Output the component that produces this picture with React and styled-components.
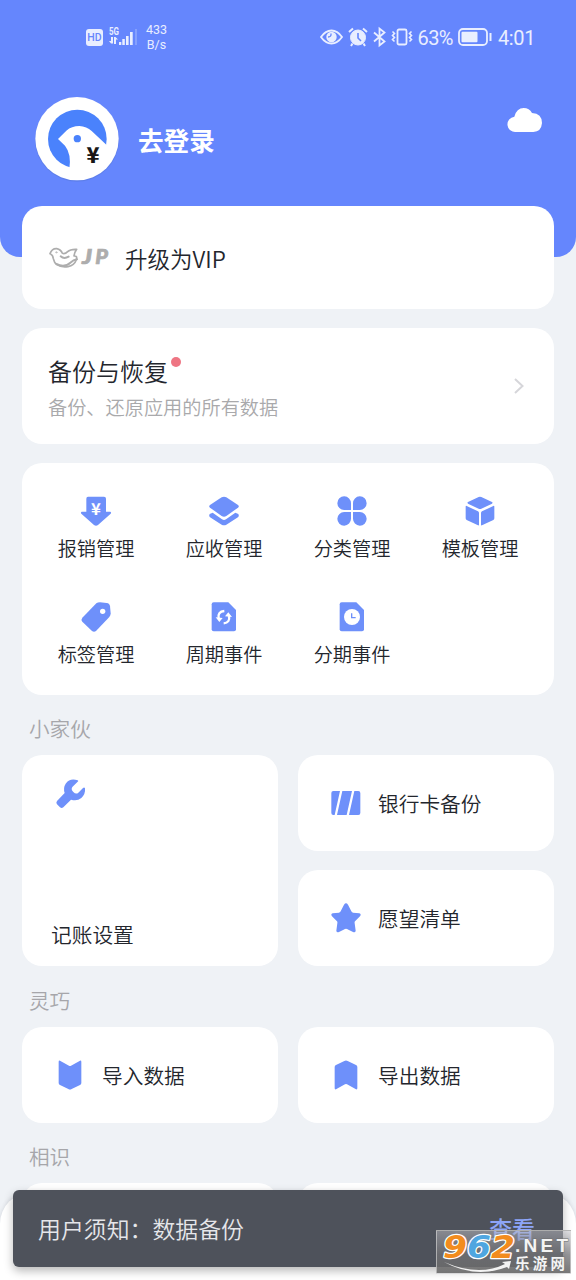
import React from "react";
import styled, { createGlobalStyle } from "styled-components";

const GlobalStyle = createGlobalStyle`
  * {
    box-sizing: border-box;
  }

  body {
    margin: 0;
    background: #eff2f6;
    font-family: "Noto Sans CJK SC", sans-serif;
    font-weight: 350;
    color: #23262d;
  }

  svg {
    display: block;
    flex-shrink: 0;
    overflow: visible;
  }
`;

const Screen = styled.div`
  position: relative;
  width: 576px;
  height: 1280px;
  overflow: hidden;
  background: #eff2f6;
`;

// Header
const Header = styled.header`
  height: 257px;
  background: #6586fd;
  border-radius: 0 0 20px 20px;
`;

const StatusBar = styled.div`
  display: flex;
  align-items: center;
  justify-content: space-between;
  height: 74px;
  padding: 0 41px 0 86px;
  color: #e9eeff;
  font-family: Roboto, sans-serif;
  font-weight: 400;
`;

const StatusGroup = styled.div`
  display: flex;
  align-items: center;
  gap: ${(props) => props.$gap}px;
`;

const HdBadge = styled.span`
  width: 17px;
  height: 17px;
  border-radius: 3px;
  background: #e9eeff;
  color: #6586fd;
  font-size: 10.5px;
  font-weight: 500;
  line-height: 18px;
  text-align: center;
`;

const Speed = styled.span`
  margin-left: 2px;
  font-size: 12.5px;
  line-height: 15px;
  text-align: center;
`;

const StatusText = styled.span`
  font-size: 20px;
  line-height: 24px;
  letter-spacing: ${(props) => props.$spacing || 0}px;
  margin-left: ${(props) => props.$left || 0}px;
  padding-top: 1px;
`;

const Profile = styled.div`
  display: flex;
  align-items: center;
  height: 130px;
  padding: 0 34px;
`;

const LoginText = styled.span`
  flex: 1;
  margin-left: 18px;
  padding-top: 1px;
  color: #fff;
  font-size: 25.6px;
  font-weight: 700;
  line-height: 36px;
`;

const CloudButton = styled.div`
  margin-top: -39px;
`;

// Content
const Content = styled.main`
  display: flex;
  flex-direction: column;
  margin-top: -51px;
  padding: 0 22px;
`;

const Card = styled.section`
  background: #fff;
  border-radius: 20px;
`;

const VipCard = styled(Card)`
  display: flex;
  align-items: center;
  gap: 15px;
  height: 103px;
  padding-left: 27px;
  font-size: 22.5px;
`;

const BackupCard = styled(Card)`
  display: flex;
  align-items: center;
  justify-content: space-between;
  height: 116px;
  margin-top: 19px;
  padding: 0 29px 0 26px;
`;

const BackupInfo = styled.div`
  padding-top: 5px;
`;

const BackupTitle = styled.div`
  display: flex;
  gap: 3px;
  font-size: 24px;
  line-height: 36px;
`;

const RedDot = styled.i`
  width: 10px;
  height: 10px;
  margin-top: 4px;
  border-radius: 50%;
  background: #ee7583;
`;

const BackupText = styled.div`
  color: #a9a9ab;
  font-size: 19.2px;
  line-height: 36px;
`;

const MenuCard = styled(Card)`
  display: grid;
  grid-template-columns: repeat(4, 128px);
  grid-auto-rows: 106px;
  height: 232px;
  margin-top: 19px;
  padding: 33px 10px 0;
`;

const MenuItem = styled.div`
  display: flex;
  flex-direction: column;
  align-items: center;
  gap: 7px;
  font-size: 19.2px;
  line-height: 30px;
`;

const SectionTitle = styled.h2`
  margin: ${(props) => props.$top || 17}px 0 10px;
  padding-left: 7px;
  color: #a6a6aa;
  font-size: 20.6px;
  font-weight: 350;
  line-height: 33px;
`;

const Columns = styled.div`
  display: grid;
  grid-template-columns: 1fr 1fr;
  gap: 19px 20px;
`;

const Tile = styled(Card)`
  display: flex;
  align-items: center;
  gap: 17px;
  height: 96px;
  padding: 0 0 1px 33px;
  font-size: 20.7px;
  line-height: 30px;
`;

const TallTile = styled(Card)`
  display: flex;
  flex-direction: column;
  justify-content: space-between;
  grid-row: span 2;
  padding: 24px 29px 17px;
  font-size: 20.7px;
  line-height: 30px;

  svg {
    margin-left: 5px;
  }
`;

// Bottom
const BottomSheet = styled.div`
  position: absolute;
  left: 0;
  right: 0;
  bottom: 0;
  height: 88px;
  border-radius: 32px 32px 0 0;
  background: #fff;
  box-shadow: 0 0 4px rgba(60, 70, 90, 0.16);
`;

const Snackbar = styled.div`
  position: absolute;
  left: 13px;
  right: 13px;
  bottom: 13px;
  display: flex;
  align-items: center;
  justify-content: space-between;
  height: 77px;
  padding: 0 28px 0 25px;
  border-radius: 6px;
  background: #4e525b;
  box-shadow: 0 4px 10px rgba(0, 0, 0, 0.28);
  color: #e5e6ea;
  font-size: 22.9px;
  line-height: 33px;
`;

const SnackAction = styled.span`
  color: #8da5f8;
  font-weight: 500;
`;

const Watermark = styled.div`
  position: absolute;
  right: 5px;
  bottom: 6px;
  width: 135px;
  height: 44px;
  border: 1px solid rgba(220, 220, 220, 0.6);
  background: linear-gradient(
    rgba(190, 190, 196, 0.5),
    rgba(115, 115, 118, 0.75) 55%,
    rgba(105, 105, 105, 0.9)
  );
`;

const blue = "#6e90fa";

const menuPaths = {
  expense: (
    <>
      <path d="M21 2h48q6 0 6 6v39h13q4 2 1 6L51 87q-6 4-12 0L1 53q-3-4 1-6h14V8q0-6 5-6Z" />
      <text x="45" y="58" fontSize="50" fontWeight="700" fill="#fff" textAnchor="middle" fontFamily="Noto Sans CJK SC, sans-serif">
        ¥
      </text>
    </>
  ),
  receivable: (
    <>
      <path d="M38 4q7-4 14 0l35 23q5 4 0 8L52 60q-7 4-14 0L3 35q-5-4 0-8Z" />
      <path d="m2 54 9-4 28 20q6 4 12 0l28-20 9 4q3 4 0 9L52 86q-7 4-14 0L2 63q-3-5 0-9Z" />
    </>
  ),
  category: (
    <path d="M42 42H22A20.500 20.500 0 1 1 42 22ZM48 42V22A20.500 20.500 0 1 1 68 42ZM42 48V68A20.500 20.500 0 1 1 22 48ZM48 48H68A20.500 20.500 0 1 1 48 68Z" />
  ),
  template: (
    <>
      <path d="M41 3q4-2 8 0l32 15q4 2 0 5L49 38q-4 2-8 0L9 23q-4-3 0-5Z" />
      <path d="m5 30 34 16q3 2 3 5v35q0 3-3 2L5 72q-3-2-3-5V32q0-4 3-2ZM85 30 51 46q-3 2-3 5v35q0 3 3 2l34-16q3-2 3-5V32q0-4-3-2Z" />
    </>
  ),
  tag: (
    <>
      <path d="M46 4q4-3 11-3l20 2q9 1 10 10l2 21q0 6-4 11L45 87q-6 4-12 0L4 59q-5-6 0-12Z" />
      <circle cx="65" cy="28" r="8" fill="#fff" />
    </>
  ),
  cycle: (
    <>
      <path d="M14 1h44l23 23v58q0 6-6 6H14q-6 0-6-6V7q0-6 6-6Z" />
      <path d="M46 27Q25 29 29 49M44 64Q64 62 60 42" fill="none" stroke="#fff" strokeWidth="7" />
      <path d="m20 46 21 2-10 12ZM69 45l-21-2 10-12Z" fill="#fff" />
    </>
  ),
  instalment: (
    <>
      <path d="M14 1h44l23 23v58q0 6-6 6H14q-6 0-6-6V7q0-6 6-6Z" />
      <circle cx="45" cy="45" r="24" fill="#fff" />
      <path d="M44 34v13h12" fill="none" stroke={blue} strokeWidth="4" />
    </>
  ),
  wrench: (
    <path d="M65 4Q42-4 29 14 21 26 26 42L3 66q-4 5 0 10l9 9q5 4 10 0l23-23q18 6 31-5 13-12 11-29-2-4-6-1L67 41q-7 6-15-2t-3-15L65 8q4-2 0-4Z" />
  ),
  card: (
    <path d="M7 9h20L11 81H7q-6 0-6-6V15q0-6 6-6ZM34 9h29L47 81H18ZM70 9h12q6 0 6 6v60q0 6-6 6H54Z" />
  ),
  star: (
    <path d="M39 5q6-8 12 0l10 20q1 3 5 4l19 2q7 3 2 9L72 55q-2 2-1 6l3 22q-1 7-8 4L48 78q-3-2-6 0l-18 9q-7 3-8-4l3-22q1-4-1-6L3 40q-5-6 2-9l19-2q4-1 5-4Z" />
  ),
  importData: (
    <path d="M15 2l27 15q3 2 6 0L75 2q4-1 4 3v64q0 4-4 6L50 87q-5 3-10 0L15 75q-4-2-4-6V5q0-4 4-3Z" />
  ),
  exportData: (
    <path d="M15 88l27-15q3-2 6 0l27 15q4 1 4-3V21q0-4-4-6L50 3q-5-3-10 0L15 15q-4 2-4 6v64q0 4 4 3Z" />
  ),
};

const Icon = ({ name }) => (
  <svg width="30" height="30" viewBox="0 0 90 90" fill={blue}>
    {menuPaths[name]}
  </svg>
);

const SignalIcon = () => (
  <svg width="29" height="22" viewBox="0 0 29 22" fill="#e9eeff">
    <text x="0" y="9" fontSize="10" fontWeight="700" textLength="10" lengthAdjust="spacingAndGlyphs">
      5G
    </text>
    <path d="M2 11h2v6.500H2l-2-2.500h2ZM5 11h1.500l2.500 2.500H7V18H5ZM10 16h2.300v3H10ZM13.300 13h2.500v6h-2.500ZM17 10h2.600v9H17ZM21 6h2.700v13H21Z" />
    <path d="M26 3h2v16h-2Z" opacity="0.25" />
  </svg>
);

const EyeIcon = () => (
  <svg width="23" height="18" viewBox="0 0 23 18" fill="none" stroke="#e9eeff" strokeWidth="1.800">
    <path d="M1 9q4.500-6.500 10.500-6.500T22 9q-4.500 6.500-10.500 6.500T1 9Z" />
    <circle cx="11.500" cy="9" r="4.300" fill="#e9eeff" />
    <path d="M11 5.500q.5 3.500-3 3.500" stroke="#6586fd" strokeWidth="1.300" />
  </svg>
);

const AlarmIcon = () => (
  <svg width="20" height="20" viewBox="0 0 20 20" fill="none" stroke="#e9eeff">
    <circle cx="10" cy="10.500" r="7.500" fill="#e9eeff" />
    <path d="m1 5 4-3.500M19 5l-4-3.500M4.500 16.500 3 19M15.500 16.500 17 19" strokeWidth="2" />
    <path d="M10 6v5l3 3" stroke="#6586fd" strokeWidth="1.600" />
  </svg>
);

const BluetoothIcon = () => (
  <svg width="13" height="20" viewBox="0 0 13 20" fill="none" stroke="#e9eeff" strokeWidth="1.800">
    <path d="m1 5.500 10.500 9L6.500 18.500v-17l5 4L1 14.500" />
  </svg>
);

const VibrateIcon = () => (
  <svg width="22" height="18" viewBox="0 0 22 18" fill="none" stroke="#e9eeff" strokeWidth="1.800">
    <rect x="6.500" y="1.500" width="9" height="15" rx="1.500" />
    <path d="m1.500 3.500 2 2-2 2 2 2-2 2 2 2M20.500 3.500l-2 2 2 2-2 2 2 2-2 2" strokeWidth="1.600" />
  </svg>
);

const BatteryIcon = () => (
  <svg width="34" height="18" viewBox="0 0 34 18">
    <rect x="1" y="1" width="28" height="16" rx="4" fill="none" stroke="#e9eeff" strokeWidth="1.800" />
    <rect x="3.500" y="3.700" width="16" height="10.600" rx="1" fill="#e9eeff" />
    <path d="M31.500 5h2v8h-2Z" fill="#e9eeff" />
  </svg>
);

const Avatar = () => (
  <svg width="86" height="86" viewBox="41 34 258 258">
    <circle cx="170" cy="165" r="126" fill="#5877d8" opacity="0.5" />
    <circle cx="170" cy="162" r="125" fill="#fff" />
    <circle cx="171" cy="163" r="88" fill="#4a82fc" />
    <path
      d="M113 163 138 138Q154 124 177 124 199 125 214 139L262 184 254 234Q205 270 147 254 154 208 134 183Z"
      fill="#fff"
    />
    <circle cx="171" cy="162" r="11" fill="#4a82fc" />
    <text
      x="218"
      y="235"
      fill="#171717"
      fontSize="64"
      fontWeight="900"
      textAnchor="middle"
      fontFamily="Noto Sans CJK SC, sans-serif"
    >
      ¥
    </text>
  </svg>
);

const CloudIcon = () => (
  <svg width="34" height="26" viewBox="0 0 102 78" fill="#fff">
    <path d="M24 75A23 23 0 0 1 19 29Q26 3 47 3 64 3 72 18 102 20 102 48 100 74 76 75Z" />
  </svg>
);

const VipLogo = () => (
  <svg width="61" height="24" viewBox="0 0 183 72" fill="none" stroke="#adadad" strokeLinecap="round">
    <path
      d="M3 23Q9 7 23 8q13 3 17 14 8 3 16-5 8-8 27-7-6 8-8 20 11-1 7 11-6 17-25 21-39 4-44-24Q12 26 3 23Z"
      strokeWidth="5"
      strokeLinejoin="round"
    />
    <path d="M22 54q25 12 42-4 9-8 20-10M35 31q10 9 24 1" strokeWidth="6" />
    <circle cx="22" cy="19" r="2" strokeWidth="2" />
    <g fill="#adadad" strokeWidth="2" fontFamily="Lato, sans-serif" fontSize="60" fontWeight="900" fontStyle="italic">
      <text x="99" y="55" textLength="30" lengthAdjust="spacingAndGlyphs">J</text>
      <text x="139" y="55" textLength="38" lengthAdjust="spacingAndGlyphs">P</text>
    </g>
  </svg>
);

const WatermarkArt = () => (
  <svg width="133" height="42" viewBox="0 0 133 42">
    <g
      fontFamily="DejaVu Sans, sans-serif"
      fontWeight="700"
      fontStyle="italic"
      fontSize="32"
      stroke="#fff"
      strokeWidth="2.500"
      strokeLinejoin="round"
      paintOrder="stroke"
    >
      <text x="6" y="27" fill="#f28c1e" textLength="24" lengthAdjust="spacingAndGlyphs">9</text>
      <text x="30" y="27" fill="#4fa6e0" textLength="24" lengthAdjust="spacingAndGlyphs">6</text>
      <text x="54" y="27" fill="#f28c1e" textLength="24" lengthAdjust="spacingAndGlyphs">2</text>
    </g>
    <path d="M7 31q35 15 61 2l-3-2 9-1-2 8-2-2Q38 48 7 31Z" fill="#f3f3f3" />
    <g fill="#f4f4f4" fontWeight="700" stroke="#707070" strokeWidth="1" paintOrder="stroke">
      <text x="78" y="21" fontFamily="Liberation Sans, sans-serif" fontSize="19" textLength="53">
        .NET
      </text>
      <text x="78" y="37.500" fontFamily="Noto Sans CJK SC, sans-serif" fontSize="14.500" textLength="50">
        乐游网
      </text>
    </g>
  </svg>
);

const menu = [
  { icon: "expense", label: "报销管理" },
  { icon: "receivable", label: "应收管理" },
  { icon: "category", label: "分类管理" },
  { icon: "template", label: "模板管理" },
  { icon: "tag", label: "标签管理" },
  { icon: "cycle", label: "周期事件" },
  { icon: "instalment", label: "分期事件" },
];

const IconTile = ({ icon, label }) => (
  <Tile>
    <Icon name={icon} />
    {label}
  </Tile>
);

const App = () => {
  return (
    <>
      <GlobalStyle />
      <Screen>
        <Header>
          <StatusBar>
            <StatusGroup $gap={6}>
              <HdBadge>HD</HdBadge>
              <SignalIcon />
              <Speed>
                433
                <br />
                B/s
              </Speed>
            </StatusGroup>
            <StatusGroup $gap={5}>
              <EyeIcon />
              <AlarmIcon />
              <BluetoothIcon />
              <VibrateIcon />
              <StatusText $left={-1} $spacing={-0.5}>
                63%
              </StatusText>
              <BatteryIcon />
              <StatusText $left={1} $spacing={-0.4}>
                4:01
              </StatusText>
            </StatusGroup>
          </StatusBar>
          <Profile>
            <Avatar />
            <LoginText>去登录</LoginText>
            <CloudButton>
              <CloudIcon />
            </CloudButton>
          </Profile>
        </Header>

        <Content>
          <VipCard>
            <VipLogo />
            <span>升级为VIP</span>
          </VipCard>

          <BackupCard>
            <BackupInfo>
              <BackupTitle>
                备份与恢复
                <RedDot />
              </BackupTitle>
              <BackupText>备份、还原应用的所有数据</BackupText>
            </BackupInfo>
            <svg width="12" height="18" viewBox="0 0 12 18" fill="none" stroke="#d6d6da" strokeWidth="2">
              <path d="m2 2 7.500 7L2 16" />
            </svg>
          </BackupCard>

          <MenuCard>
            {menu.map((item) => (
              <MenuItem key={item.icon}>
                <Icon name={item.icon} />
                {item.label}
              </MenuItem>
            ))}
          </MenuCard>

          <SectionTitle>小家伙</SectionTitle>
          <Columns>
            <TallTile>
              <Icon name="wrench" />
              记账设置
            </TallTile>
            <IconTile icon="card" label="银行卡备份" />
            <IconTile icon="star" label="愿望清单" />
          </Columns>

          <SectionTitle $top={18}>灵巧</SectionTitle>
          <Columns>
            <IconTile icon="importData" label="导入数据" />
            <IconTile icon="exportData" label="导出数据" />
          </Columns>

          <SectionTitle>相识</SectionTitle>
          <Columns>
            <Tile />
            <Tile />
          </Columns>
        </Content>

        <BottomSheet />
        <Snackbar>
          <span>用户须知：数据备份</span>
          <SnackAction>查看</SnackAction>
        </Snackbar>
        <Watermark>
          <WatermarkArt />
        </Watermark>
      </Screen>
    </>
  );
};

export default App;
